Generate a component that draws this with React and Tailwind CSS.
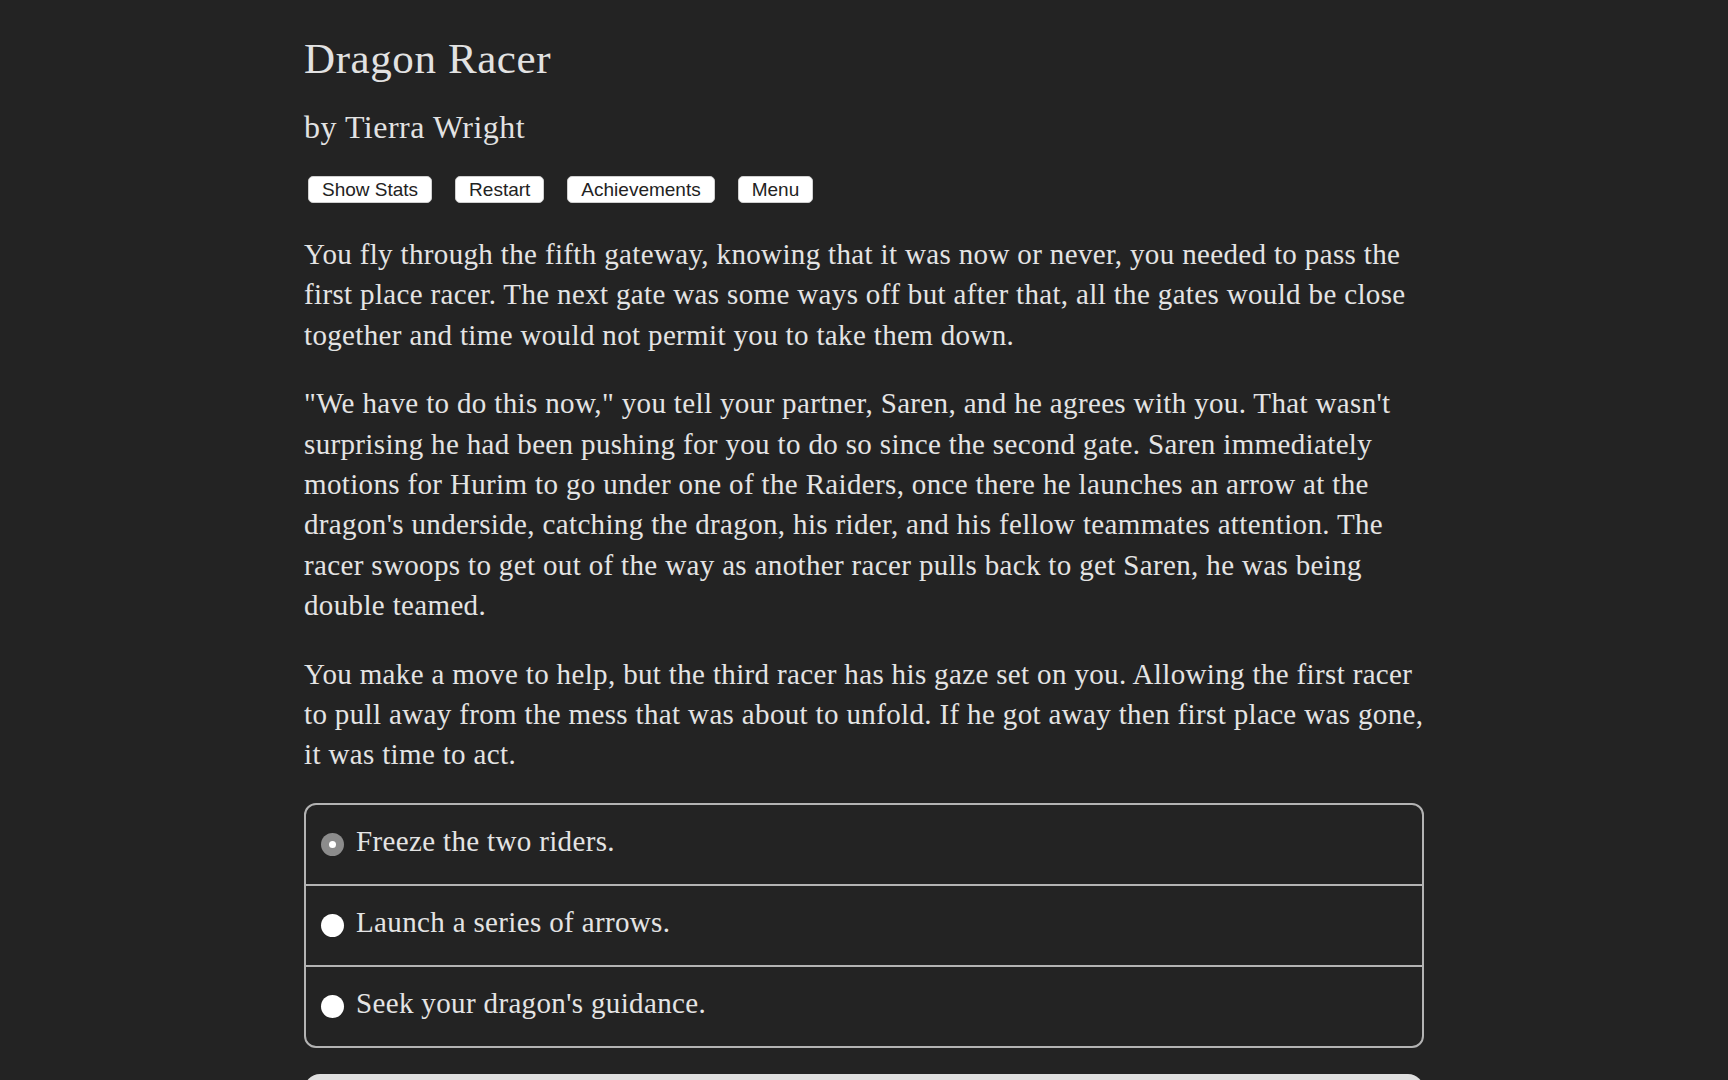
import React, { useState } from 'react';

const paragraphs = [
    "You fly through the fifth gateway, knowing that it was now or never, you needed to pass the first place racer. The next gate was some ways off but after that, all the gates would be close together and time would not permit you to take them down.",
    "\"We have to do this now,\" you tell your partner, Saren, and he agrees with you. That wasn't surprising he had been pushing for you to do so since the second gate. Saren immediately motions for Hurim to go under one of the Raiders, once there he launches an arrow at the dragon's underside, catching the dragon, his rider, and his fellow teammates attention. The racer swoops to get out of the way as another racer pulls back to get Saren, he was being double teamed.",
    "You make a move to help, but the third racer has his gaze set on you. Allowing the first racer to pull away from the mess that was about to unfold. If he got away then first place was gone, it was time to act.",
];

const choices = [
    "Freeze the two riders.",
    "Launch a series of arrows.",
    "Seek your dragon's guidance.",
];

const buttons = ["Show Stats", "Restart", "Achievements", "Menu"];

const Radio = ({ checked }) => (
    <span
        className={
            checked
                ? "w-[23px] h-[23px] rounded-full bg-[#8c8c8c] flex items-center justify-center shrink-0"
                : "w-[23px] h-[23px] rounded-full bg-white shrink-0"
        }
    >
        {checked && <span className="w-[7px] h-[7px] rounded-full bg-white" />}
    </span>
);

export default function App() {
    const [selected, setSelected] = useState(0);

    return (
        <div className="min-h-screen bg-[#232323] text-[#e4e4e4] font-['Liberation_Serif',serif] overflow-hidden">
            <div className="w-[1120px] mx-auto pt-[35px]">
                {/* Header */}
                <h1 className="text-[43px] leading-[48px] tracking-[0.6px] text-[#e2e2e2]">Dragon Racer</h1>
                <h2 className="mt-[24px] text-[32px] leading-[40px] tracking-[0.5px] text-[#e2e2e2]">by Tierra Wright</h2>

                {/* Top buttons */}
                <div className="mt-[29px] pl-[4px] flex gap-[23px]">
                    {buttons.map((label) => (
                        <button
                            key={label}
                            className="h-[27px] px-[13px] bg-white text-[#222] rounded-[5px] border border-[#cfcfcf] font-['Liberation_Sans',sans-serif] text-[19px] leading-none"
                        >
                            {label}
                        </button>
                    ))}
                </div>

                {/* Story text */}
                <div className="mt-[31px] flex flex-col gap-[28px] text-[29px] leading-[40.4px] tracking-[0.35px]">
                    {paragraphs.map((p, i) => (
                        <p key={i}>{p}</p>
                    ))}
                </div>

                {/* Choices */}
                <div className="mt-[28px] border-2 border-[#b3b3b3] rounded-[12px] overflow-hidden">
                    {choices.map((c, i) => (
                        <label
                            key={c}
                            onClick={() => setSelected(i)}
                            className={
                                "h-[79px] box-content flex items-center gap-[12px] pl-[15px] text-[29px] leading-[40px] tracking-[0.35px] cursor-pointer" +
                                (i > 0 ? " border-t-2 border-[#b3b3b3]" : "")
                            }
                        >
                            <Radio checked={selected === i} />
                            <span className="mb-[6px]">{c}</span>
                        </label>
                    ))}
                </div>

                {/* Next button (only its top edge is in view) */}
                <button aria-label="Next" className="mt-[26px] w-full h-[60px] rounded-[16px] bg-[#e0e0e0]" />
            </div>
        </div>
    );
}
